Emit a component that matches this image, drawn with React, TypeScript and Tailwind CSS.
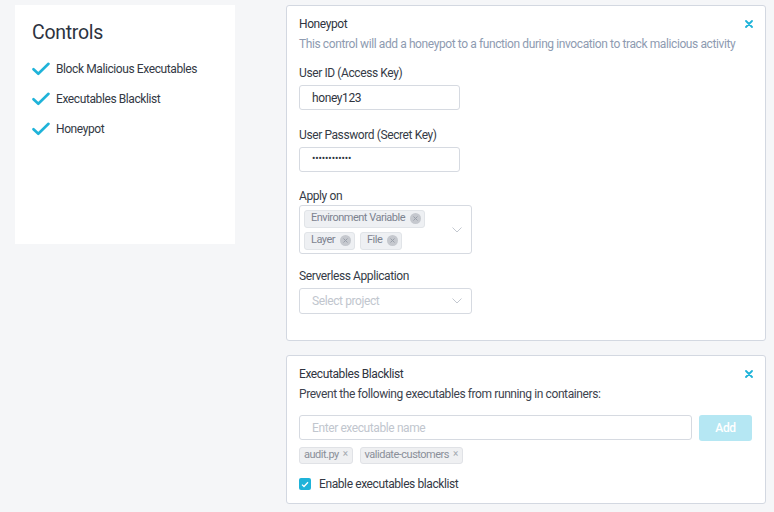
import React from "react";

const Check = () => (
  <svg width="18" height="14" viewBox="0 0 18 14" fill="none">
    <path d="M1.5 7.2 L6.3 11.8 L16.5 1.8" stroke="#1fb3d9" strokeWidth="2.6" strokeLinecap="round" strokeLinejoin="round" />
  </svg>
);

const Close = () => (
  <svg width="8" height="8" viewBox="0 0 8 8">
    <path d="M1 1 L7 7 M7 1 L1 7" stroke="#1fb3d9" strokeWidth="1.8" strokeLinecap="round" />
  </svg>
);

const Chevron = () => (
  <svg width="10" height="6" viewBox="0 0 10 6" fill="none">
    <path d="M0.5 0.5 L5 5 L9.5 0.5" stroke="#c3c8d0" strokeWidth="1" />
  </svg>
);

const CircleX = () => (
  <span className="inline-flex items-center justify-center w-[11px] h-[11px] rounded-full bg-[#c5c8ce]">
    <svg width="5" height="5" viewBox="0 0 5 5">
      <path d="M0.5 0.5 L4.5 4.5 M4.5 0.5 L0.5 4.5" stroke="#9aa0aa" strokeWidth="1" />
    </svg>
  </span>
);

const Chip = ({ label }: { label: string }) => (
  <span className="inline-flex items-center h-[18px] pl-[6px] pr-[3px] gap-[5px] rounded-[3px] bg-[#eef0f3] border border-[#e1e4e8] text-[11px] tracking-[-0.5px] text-[#7d8390]">
    {label}
    <CircleX />
  </span>
);

const SmallChip = ({ label }: { label: string }) => (
  <span className="inline-flex items-center h-[17px] pl-[4px] pr-[4px] gap-[4px] rounded-[3px] bg-[#eff0f2] border border-[#e0e2e6] text-[11px] tracking-[-0.5px] text-[#8a8f99]">
    {label}
    <span className="text-[10px] text-[#a4a9b1] leading-none -mt-[3px]">×</span>
  </span>
);

export default function App() {
  return (
    <div
      className="w-[774px] h-[512px] bg-[#f5f6f8] flex pl-[15px] pt-[5px] text-[#353b46] tracking-[-0.4px]"
      style={{ fontFamily: "Roboto, 'Noto Sans', sans-serif" }}
    >
      <div className="w-[220px] h-[239px] bg-white pl-[17px] pt-[16px] flex flex-col">
        <div className="text-[19.5px] leading-[24px] text-[#2d3340] tracking-[-0.3px]">Controls</div>
        <div className="flex flex-col gap-[14px] mt-[16px]">
          {["Block Malicious Executables", "Executables Blacklist", "Honeypot"].map((t) => (
            <div key={t} className="flex items-center h-[16px] gap-[6px]">
              <Check />
              <span className="text-[12px] text-[#333944]">{t}</span>
            </div>
          ))}
        </div>
      </div>

      <div className="ml-[51px] w-[480px] flex flex-col gap-[14px]">
        <div className="h-[336px] bg-white border border-[#d3d8e1] rounded-[3px] pl-[12px] pr-[13px] pt-[10px] text-[12px]">
          <div className="flex items-center justify-between h-[16px]">
            <span className="text-[#2f3440]">Honeypot</span>
            <span className="mr-[-1px]"><Close /></span>
          </div>
          <div className="mt-[4px] h-[16px] leading-[16px] text-[#8e9bb1] whitespace-nowrap">
            This control will add a honeypot to a function during invocation to track malicious activity
          </div>

          <div className="mt-[13px] h-[16px] leading-[16px]">User ID (Access Key)</div>
          <div className="mt-[4px] w-[161px] h-[25px] border border-[#d6dae1] rounded-[3px] flex items-center pl-[12px] text-[#30353f]">
            honey123
          </div>

          <div className="mt-[17px] h-[16px] leading-[16px]">User Password (Secret Key)</div>
          <div className="mt-[4px] w-[161px] h-[25px] border border-[#d6dae1] rounded-[3px] flex items-center pl-[12px] text-[#30353f]">
            <span className="-mt-[3px] text-[10px] tracking-[-0.1px]">••••••••••••</span>
          </div>

          <div className="mt-[16px] h-[16px] leading-[16px]">Apply on</div>
          <div className="mt-[1px] w-[173px] h-[49px] border border-[#d6dae1] rounded-[3px] flex items-center pr-[9px]">
            <div className="flex-1 flex flex-col gap-[4px] pl-[4px]">
              <div className="flex"><Chip label="Environment Variable" /></div>
              <div className="flex gap-[5px]"><Chip label="Layer" /><Chip label="File" /></div>
            </div>
            <Chevron />
          </div>

          <div className="mt-[14px] h-[16px] leading-[16px]">Serverless Application</div>
          <div className="mt-[4px] w-[173px] h-[26px] border border-[#d6dae1] rounded-[3px] flex items-center justify-between pl-[12px] pr-[9px]">
            <span className="text-[#c1c6ce]">Select project</span>
            <Chevron />
          </div>
        </div>

        <div className="h-[149px] bg-white border border-[#d3d8e1] rounded-[3px] pl-[12px] pr-[13px] pt-[10px] text-[12px]">
          <div className="flex items-center justify-between h-[16px]">
            <span className="text-[#2f3440]">Executables Blacklist</span>
            <span className="mr-[-1px]"><Close /></span>
          </div>
          <div className="mt-[4px] h-[16px] leading-[16px] text-[#3d434e]">
            Prevent the following executables from running in containers:
          </div>
          <div className="mt-[13px] flex gap-[7px]">
            <div className="w-[393px] h-[25px] border border-[#d6dae1] rounded-[3px] flex items-center pl-[12px] text-[#c1c6ce]">
              Enter executable name
            </div>
            <div className="w-[53px] h-[26px] rounded-[3px] bg-[#b5e7f3] text-white font-medium flex items-center justify-center">
              Add
            </div>
          </div>
          <div className="mt-[6px] flex gap-[7px]">
            <SmallChip label="audit.py" />
            <SmallChip label="validate-customers" />
          </div>
          <div className="mt-[11px] flex items-center gap-[8px]">
            <span className="w-[12px] h-[12px] rounded-[2px] bg-[#1fb3d9] flex items-center justify-center">
              <svg width="8" height="7" viewBox="0 0 8 7" fill="none">
                <path d="M1 3.6 L3 5.5 L7 1.2" stroke="white" strokeWidth="1.3" />
              </svg>
            </span>
            <span className="text-[#333944]">Enable executables blacklist</span>
          </div>
        </div>
      </div>
    </div>
  );
}
